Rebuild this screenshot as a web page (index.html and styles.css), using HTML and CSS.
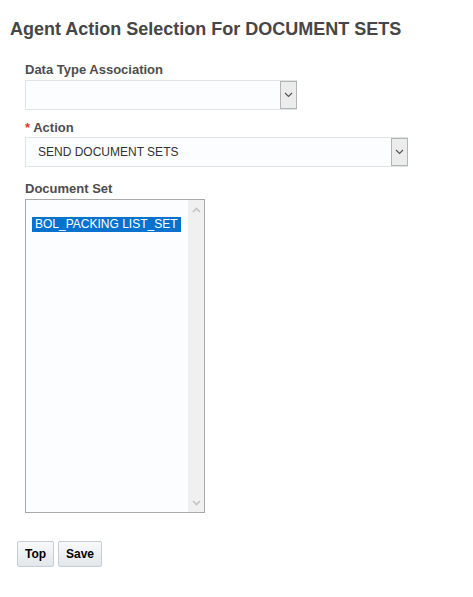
FILE: index.html
```html
<!DOCTYPE html>
<html>
<head>
<meta charset="utf-8">
<link rel="stylesheet" href="styles.css">
</head>
<body>
<h1 class="title">Agent Action Selection For DOCUMENT SETS</h1>
<div class="form">
  <div class="field f1">
    <div class="label">Data Type Association</div>
    <div class="select w1">
      <span class="value"></span>
      <span class="btn"><svg width="9" height="6" viewBox="0 0 9 6"><path d="M1 1 L4.5 4.5 L8 1" fill="none" stroke="#555" stroke-width="1.2"/></svg></span>
    </div>
  </div>
  <div class="field f2">
    <div class="label"><span class="req">*</span> Action</div>
    <div class="select w2">
      <span class="value">SEND DOCUMENT SETS</span>
      <span class="btn"><svg width="9" height="6" viewBox="0 0 9 6"><path d="M1 1 L4.5 4.5 L8 1" fill="none" stroke="#555" stroke-width="1.2"/></svg></span>
    </div>
  </div>
  <div class="field f3">
    <div class="label">Document Set</div>
    <div class="listbox">
      <div class="options">
        <div class="option selected">BOL_PACKING LIST_SET</div>
      </div>
      <div class="scrollbar">
        <svg width="9" height="6" viewBox="0 0 9 6"><path d="M1 5 L4.5 1.5 L8 5" fill="none" stroke="#c3c3c3" stroke-width="1.6"/></svg>
        <svg width="9" height="6" viewBox="0 0 9 6"><path d="M1 1 L4.5 4.5 L8 1" fill="none" stroke="#c3c3c3" stroke-width="1.6"/></svg>
      </div>
    </div>
  </div>
</div>
<div class="buttons">
  <button class="button b-top">Top</button>
  <button class="button b-save">Save</button>
</div>
</body>
</html>
```
FILE: styles.css
```css
html, body {
  margin: 0;
  padding: 0;
  background: #ffffff;
  font-family: "Liberation Sans", Arial, sans-serif;
}
.title {
  margin: 18px 0 0 10px;
  font-size: 18px;
  line-height: 22px;
  font-weight: bold;
  color: #464646;
}
.form {
  padding-left: 25px;
}
.label {
  font-size: 13px;
  line-height: 16px;
  font-weight: bold;
  color: #4d4d4d;
}
.req {
  color: #e0372b;
}
.f1 { margin-top: 22px; }
.f1 .label { margin-bottom: 2px; }
.f2 { margin-top: 10px; }
.f2 .label { margin-bottom: 1px; }
.f3 { margin-top: 14px; }
.f3 .label { margin-bottom: 2px; }
.select {
  display: flex;
  height: 30px;
  box-sizing: border-box;
  border: 1px solid #dfe4e7;
  background: #fcfdfe;
}
.w1 { width: 272px; }
.w2 { width: 383px; }
.value {
  flex: 1;
  padding-left: 12px;
  font-size: 12px;
  line-height: 28px;
  color: #333333;
}
.btn {
  width: 17px;
  box-sizing: border-box;
  border: 1px solid #b4b4b4;
  background: #ececec;
  display: flex;
  align-items: center;
  justify-content: center;
  margin: 0 -1px 0 0;
}
.listbox {
  display: flex;
  width: 180px;
  height: 314px;
  box-sizing: border-box;
  border: 1px solid #a9a9a9;
  background: #fcfdfe;
}
.options {
  flex: 1;
  padding: 17px 0 0 6px;
}
.option {
  width: 149px;
  height: 15px;
  font-size: 12px;
  line-height: 15px;
  padding-left: 3px;
  box-sizing: border-box;
}
.selected {
  background: #0572ce;
  color: #ffffff;
}
.scrollbar {
  width: 16px;
  background: #f0f0f0;
  display: flex;
  flex-direction: column;
  justify-content: space-between;
  align-items: center;
  padding: 7px 0 6px;
  box-sizing: border-box;
}
.buttons {
  display: flex;
  gap: 4px;
  margin: 28px 0 0 17px;
}
.button {
  height: 26px;
  padding: 0;
  border: 1px solid #c4ced7;
  border-radius: 2px;
  background: linear-gradient(#f8f9fa, #e3e7ea);
  font-family: "Liberation Sans", Arial, sans-serif;
  font-size: 12px;
  font-weight: bold;
  color: #000000;
}
.b-top { width: 37px; }
.b-save { width: 44px; }
```
